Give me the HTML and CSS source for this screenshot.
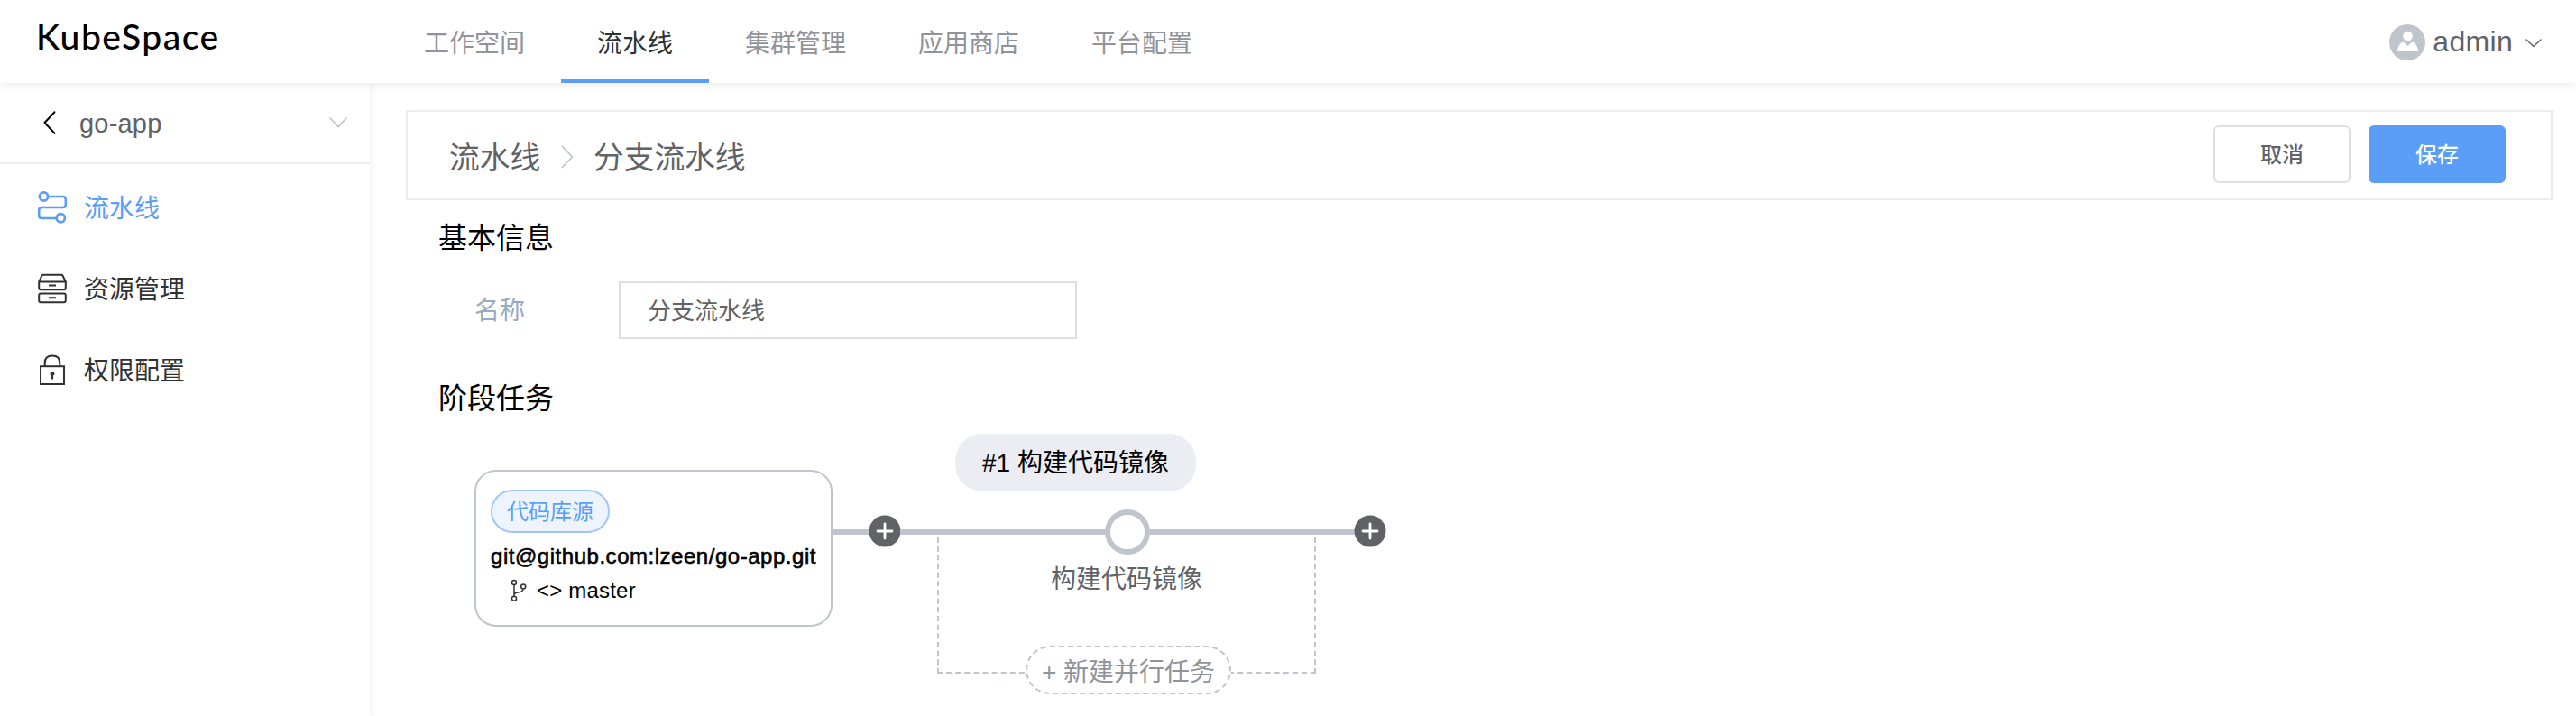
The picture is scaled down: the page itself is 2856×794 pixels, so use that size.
FILE: index.html
```html
<!DOCTYPE html>
<html lang="zh">
<head>
<meta charset="utf-8">
<title>KubeSpace</title>
<link rel="stylesheet" href="styles.css">
</head>
<body>
<header class="topbar">
  <div class="logo">KubeSpace</div>
  <nav class="nav">
    <a class="nav-item">工作空间</a>
    <a class="nav-item active">流水线</a>
    <a class="nav-item">集群管理</a>
    <a class="nav-item">应用商店</a>
    <a class="nav-item">平台配置</a>
  </nav>
  <div class="user">
    <svg class="avatar" viewBox="0 0 40 40"><circle cx="20" cy="20" r="20" fill="#c0c4cc"/><circle cx="20.500" cy="13" r="5.300" fill="#fff"/><path d="M9 30C9 25 12 20.500 15.500 19.500L20.500 24L25.500 19.500C29 20.500 32 25 32 30Z" fill="#fff"/></svg>
    <span class="user-name">admin</span>
    <svg class="user-arrow" viewBox="0 0 18 10"><path d="M1 1L9 8.500L17 1" fill="none" stroke="#606266" stroke-width="1.500" stroke-linecap="round" stroke-linejoin="round"/></svg>
  </div>
</header>
<div class="body">
  <aside class="sidebar">
    <div class="app-switch">
      <svg class="back" viewBox="0 0 14 26"><path d="M12.500 1.200L1.500 13L12.500 24.800" fill="none" stroke="#000" stroke-width="2" stroke-linecap="round" stroke-linejoin="round"/></svg>
      <span class="app-name">go-app</span>
      <svg class="app-arrow" viewBox="0 0 20 12"><path d="M1 1L10 10.500L19 1" fill="none" stroke="#c0c4cc" stroke-width="1.800" stroke-linecap="round" stroke-linejoin="round"/></svg>
    </div>
    <a class="menu-item active">
      <svg class="menu-icon" viewBox="0 0 32 36" fill="none" stroke="currentColor" stroke-width="2.600"><circle cx="6.500" cy="6" r="4.600" stroke-width="2.800"/><circle cx="25.300" cy="29.800" r="4.600" stroke-width="2.800"/><path d="M11.500 6H27.500Q30.800 6 30.800 9V15Q30.800 18 27.500 18H4.500Q1.200 18 1.200 21V27Q1.200 30 4.500 30H20.300"/></svg>
      <span>流水线</span>
    </a>
    <a class="menu-item">
      <svg class="menu-icon" viewBox="0 0 32 36" fill="none" stroke="currentColor" stroke-width="2"><path d="M1.200 10.500L4.500 3.500Q5 2.800 6 2.800H26Q27 2.800 27.500 3.500L30.800 10.500V17Q30.800 19.200 28.800 19.200H3.200Q1.200 19.200 1.200 17ZM1.200 10.400H30.800"/><rect x="1.200" y="23.400" width="29.600" height="9.800" rx="2"/><path d="M12 14.600H20M12 28.300H20" stroke-width="2"/></svg>
      <span>资源管理</span>
    </a>
    <a class="menu-item">
      <svg class="menu-icon" viewBox="0 0 32 36" fill="none" stroke="currentColor" stroke-width="2"><rect x="3" y="14.200" width="26" height="19.800"/><path d="M7.700 14V10.500Q7.700 2.500 16 2.500Q24.300 2.500 24.300 10.500V14"/><path d="M16 23V28.500" stroke-width="2.200"/><rect x="14.300" y="20.800" width="3.400" height="2.600" fill="currentColor" stroke-width="1.200"/></svg>
      <span>权限配置</span>
    </a>
  </aside>
  <main class="main">
    <section class="title-bar">
      <span>流水线</span>
      <svg class="crumb-arrow" viewBox="0 0 14 26"><path d="M1.500 1.500L12.500 13L1.500 24.500" fill="none" stroke="#c0c4cc" stroke-width="1.800" stroke-linecap="round" stroke-linejoin="round"/></svg>
      <span>分支流水线</span>
      <div class="actions">
        <button class="btn">取消</button>
        <button class="btn primary">保存</button>
      </div>
    </section>
    <h2 class="heading">基本信息</h2>
    <div class="form-row">
      <label class="label" for="pipeline-name">名称</label>
      <input class="input" id="pipeline-name" value="分支流水线">
    </div>
    <h2 class="heading stages-heading">阶段任务</h2>
    <div class="pipeline">
      <div class="source">
        <span class="tag">代码库源</span>
        <div class="repo">git@github.com:lzeen/go-app.git</div>
        <div class="branch">
          <svg class="branch-icon" viewBox="0 0 18 26" fill="none" stroke="#333" stroke-width="1.500"><circle cx="4" cy="4" r="2.500"/><circle cx="4" cy="21.800" r="2.500"/><circle cx="14.200" cy="8.500" r="2.500"/><path d="M4 6.500V19.300M4 17.500Q4.500 15 8 15C12 15 13.500 14 14 11"/></svg>
          <span>&lt;&gt; master</span>
        </div>
      </div>
      <div class="wire lead"></div>
      <svg class="add" viewBox="0 0 36 36"><circle cx="18" cy="18" r="17.500" fill="#606266"/><path d="M18 10V26M10 18H26" stroke="#fff" stroke-width="2.800" stroke-linecap="round"/></svg>
      <div class="stage">
        <div class="stage-name">#1 构建代码镜像</div>
        <div class="track"><div class="wire"></div><div class="ring"></div><div class="wire"></div></div>
        <div class="parallel">
          <div class="task">构建代码镜像</div>
          <div class="new-task">+ 新建并行任务</div>
        </div>
      </div>
      <svg class="add" viewBox="0 0 36 36"><circle cx="18" cy="18" r="17.500" fill="#606266"/><path d="M18 10V26M10 18H26" stroke="#fff" stroke-width="2.800" stroke-linecap="round"/></svg>
    </div>
  </main>
</div>
</body>
</html>
```
FILE: styles.css
```css
* { box-sizing: border-box; }
body {
  margin: 0;
  height: 794px;
  overflow: hidden;
  background: #fff;
  color: #303133;
  font-family: "Liberation Sans", "Noto Sans CJK SC", sans-serif;
  font-size: 28px;
}
svg { display: block; flex: none; overflow: visible; }
.topbar {
  position: relative;
  display: flex;
  height: 92px;
  background: #fff;
  box-shadow: 0 0 12px rgba(0, 30, 25, .12);
}
.logo {
  width: 430px;
  flex: none;
  padding-left: 40px;
  color: #000;
  font: 500 39px/80px Lato, sans-serif;
  letter-spacing: 1.5px;
}
.nav { display: flex; }
.nav-item {
  height: 92px;
  padding: 0 40px;
  color: #909399;
  line-height: 97px;
  white-space: nowrap;
}
.nav-item.active { color: #303133; border-bottom: 4px solid #5a9ef8; }
.user {
  display: flex;
  align-items: center;
  margin-left: auto;
  padding: 2px 38px 0 0;
  color: #606266;
}
.avatar { width: 40px; height: 40px; }
.user-name { margin: -2px 0 0 8px; font-size: 32px; letter-spacing: .3px; }
.user-arrow { width: 18px; height: 10px; margin: 2px 0 0 14px; }
.body { display: flex; height: 702px; }
.sidebar { width: 410px; flex: none; box-shadow: 1px 0 8px rgba(0, 30, 40, .07); }
.app-switch {
  display: flex;
  align-items: center;
  height: 90px;
  margin-bottom: 3px;
  padding: 0 25px 0 48px;
  border-bottom: 2px solid #ebecf2;
  color: #606266;
}
.back { width: 14px; height: 26px; }
.app-name { margin: 3px 0 0 26px; font-size: 29px; letter-spacing: .2px; }
.app-arrow { width: 20px; height: 12px; margin-left: auto; }
.menu-item { display: flex; align-items: center; gap: 19px; height: 90px; padding-left: 42px; }
.menu-item span { margin-bottom: 3px; }
.menu-icon { width: 32px; height: 36px; }
.menu-item.active { color: #5a9ef8; }
.main { flex: 1; padding: 30px 26px 0 40px; color: #000; }
.title-bar {
  display: flex;
  align-items: center;
  height: 100px;
  padding: 0 50px 2px 46px;
  border: 2px solid #ebecf2;
  color: #606266;
  font-size: 33.700px;
}
.title-bar > span { padding-top: 3px; }
.crumb-arrow { width: 14px; height: 26px; margin: 5px 22px 0 23px; }
.actions { display: flex; gap: 20px; margin-left: auto; }
.btn {
  width: 152px;
  height: 64px;
  padding: 0 0 3px;
  border: 2px solid #dcdfe6;
  border-radius: 6px;
  background: #fff;
  color: #606266;
  font: 500 24px "Noto Sans CJK SC", sans-serif;
}
.btn.primary { border-color: #5a9ef8; background: #5a9ef8; color: #fff; }
.heading { margin: 22px 0 0 36px; font-size: 32px; font-weight: 400; line-height: 40px; }
.form-row { display: flex; align-items: center; margin: 28px 0 0 76px; }
.label { width: 160px; margin-bottom: 4px; color: #99a9bf; }
.input {
  width: 508px;
  height: 64px;
  padding: 0 30px 4px;
  border: 2px solid #dcdfe6;
  color: #606266;
  font: inherit;
  font-size: 26px;
}
.stages-heading { margin-top: 46px; }
.pipeline { display: flex; align-items: flex-start; margin: 19px 0 0 76px; }
.source {
  width: 397px;
  height: 174px;
  margin-top: 40px;
  padding: 20px 0 0 16px;
  border: 2px solid #c0c4cc;
  border-radius: 24px;
  font-size: 24px;
  white-space: nowrap;
}
.tag {
  display: block;
  width: 132px;
  height: 48px;
  border: 2px solid #a0c7fb;
  border-radius: 24px;
  background: #edf4fe;
  color: #5a9ef8;
  line-height: 46px;
  text-align: center;
}
.repo { margin-top: 12px; line-height: 28px; letter-spacing: .53px; -webkit-text-stroke: .6px #000; }
.branch { display: flex; align-items: center; gap: 11px; margin: 10px 0 0 22px; line-height: 28px; letter-spacing: .2px; }
.branch-icon { width: 18px; height: 26px; }
.wire { height: 6px; background: #c0c4cc; }
.lead { width: 41px; margin-top: 106px; }
.add { width: 36px; height: 36px; margin: 90px -1px 0; }
.stage { display: flex; flex-direction: column; align-items: center; width: 504px; }
.stage-name {
  height: 64px;
  margin-right: 115px;
  padding: 0 30px;
  border-radius: 30px;
  background: #ecedf3;
  line-height: 66px;
  white-space: nowrap;
}
.track { display: flex; align-items: center; width: 100%; height: 50px; margin-top: 20px; }
.track .wire { flex: 1; }
.ring { width: 50px; height: 50px; border: 6px solid #c0c4cc; border-radius: 50%; background: #fff; }
.parallel {
  display: flex;
  flex-direction: column;
  align-items: center;
  width: 420px;
  height: 151px;
  margin-top: -19px;
  margin-right: 2px;
  border: 2px dashed #c0c4cc;
  border-top: 0;
}
.task { margin-top: 27px; color: #606266; line-height: 40px; }
.new-task {
  flex: none;
  width: 228px;
  height: 54px;
  margin: 53px 0 0 4px;
  border: 2px dashed #c0c4cc;
  border-radius: 27px;
  background: #fff;
  color: #909399;
  line-height: 55px;
  text-align: center;
  white-space: nowrap;
}
```
